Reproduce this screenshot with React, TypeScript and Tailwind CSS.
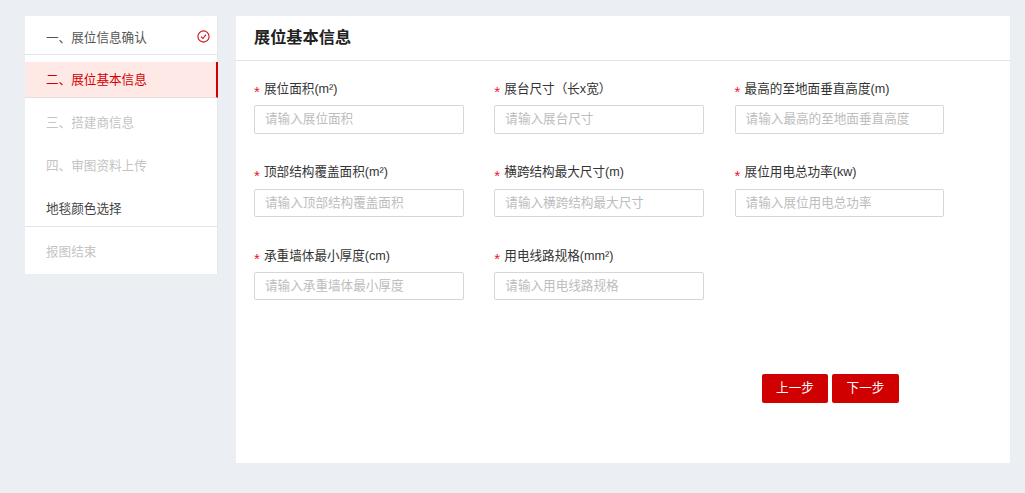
const steps = [
  { text: '一、展位信息确认', className: 'h-[39px] pt-[7px] text-[#555] border-b border-[#e2e4e8] mb-[7px]', done: true },
  { text: '二、展位基本信息', className: 'h-[36px] pt-[2px] text-[#d40000] bg-[#ffe9e6] border-b border-[#e6dedd] w-[193px] border-r-2 border-r-[#d00000]' },
  { text: '三、搭建商信息', className: 'h-[43px] pt-[8px] text-[#c4c4c4]' },
  { text: '四、审图资料上传', className: 'h-[43px] pt-[8px] text-[#c4c4c4]' },
  { text: '地毯颜色选择', className: 'h-[43px] pt-[8px] text-[#444] border-b border-[#e2e4e8]' },
  { text: '报图结束', className: 'h-[47px] pt-[3px] text-[#c4c4c4]' },
]

const fields = [
  { label: '展位面积(m²)', placeholder: '请输入展位面积' },
  { label: '展台尺寸（长x宽）', placeholder: '请输入展台尺寸' },
  { label: '最高的至地面垂直高度(m)', placeholder: '请输入最高的至地面垂直高度' },
  { label: '顶部结构覆盖面积(m²)', placeholder: '请输入顶部结构覆盖面积' },
  { label: '横跨结构最大尺寸(m)', placeholder: '请输入横跨结构最大尺寸' },
  { label: '展位用电总功率(kw)', placeholder: '请输入展位用电总功率' },
  { label: '承重墙体最小厚度(cm)', placeholder: '请输入承重墙体最小厚度' },
  { label: '用电线路规格(mm²)', placeholder: '请输入用电线路规格' },
]

const App = () => {
  return (
    <div className="h-[493px] w-[1025px] overflow-hidden bg-[#ebeef3] pl-[25px] pt-[16px] font-['Liberation_Sans','Noto_Sans_CJK_SC',sans-serif] text-[12.6px]">
      <div className="flex items-start gap-[18px]">

        <div className="w-[193px] h-[258px] shrink-0 bg-white border-r border-[#e6e8ec]">
          {steps.map(({ text, className, done }) => (
            <div key={text} className={`flex items-center justify-between pl-[21px] pr-[7px] ${className}`}>
              <span>{text}</span>
              {done && (
                <svg width="13" height="13" viewBox="0 0 13 13" fill="none" stroke="#d0121b" strokeWidth="1.1" className="-mt-[4px]">
                  <circle cx="6.5" cy="6.5" r="5.6" />
                  <path d="M4 6.6 L5.9 8.5 L9 4.6" />
                </svg>
              )}
            </div>
          ))}
        </div>

        <div className="w-[774px] h-[447px] shrink-0 bg-white">
          <div className="h-[45px] flex items-center pl-[18px] pb-[1px] border-b border-[#e2e4e8] text-[16.2px] font-bold text-[#222]">
            展位基本信息
          </div>

          <div className="flex flex-wrap pl-[18px] pt-[19.4px]">
            {fields.map(({ label, placeholder }) => (
              <div key={label} className="w-[240.3px] h-[83.4px]">
                <div className="flex items-center h-[20px] mb-[5px] text-[#333]">
                  <span className="w-[10px] text-[15px] leading-none pt-[3px] text-[#e6162d]">*</span>
                  <span className="-mt-[2px]">{label}</span>
                </div>
                <input
                  placeholder={placeholder}
                  className="block w-[209.6px] h-[28.2px] rounded-[2px] border border-[#d4d6da] px-[10px] text-[12.6px] outline-none placeholder:text-[#bdbdbd]"
                />
              </div>
            ))}
          </div>

          <div className="flex gap-[4px] pl-[526px] pt-[43.4px]">
            <button className="w-[66px] h-[29px] rounded-[2px] bg-[#d00000] text-white">上一步</button>
            <button className="w-[67px] h-[29px] rounded-[2px] bg-[#d00000] text-white">下一步</button>
          </div>
        </div>

      </div>
    </div>
  )
}

export default App
